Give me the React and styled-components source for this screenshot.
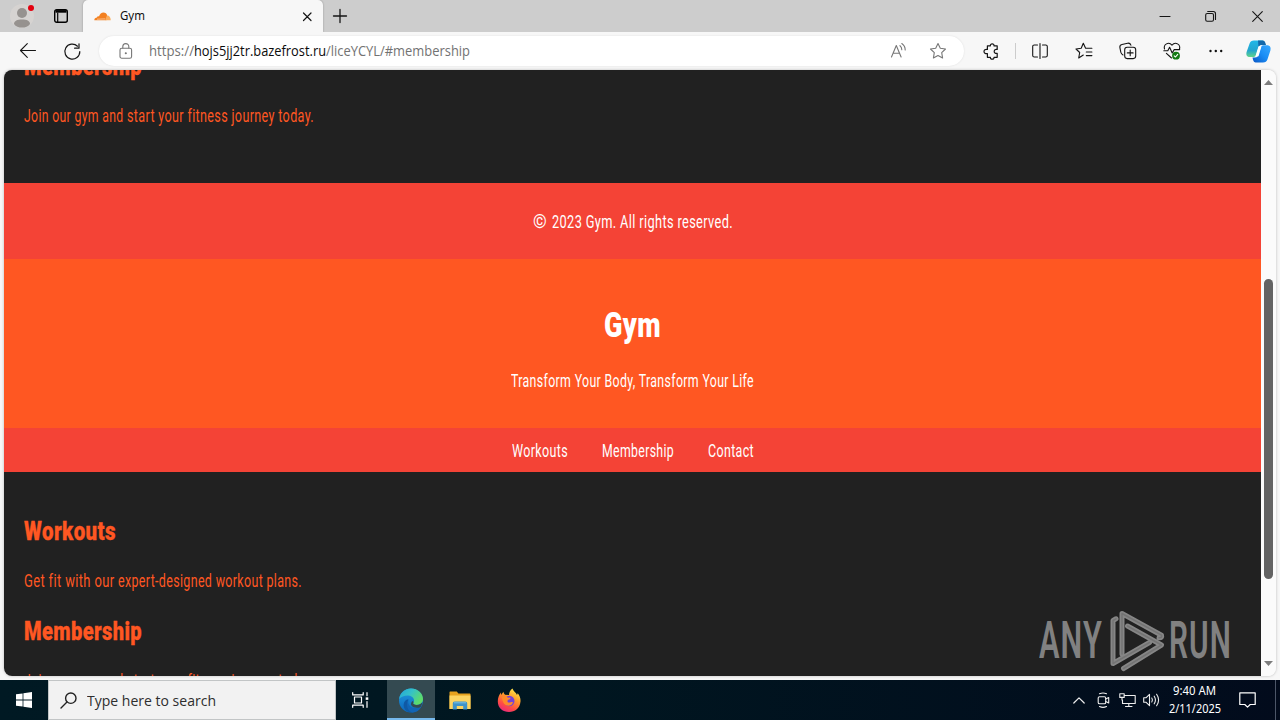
import React, { useLayoutEffect, useRef, useState } from "react";
import styled, { createGlobalStyle } from "styled-components";

const Global = createGlobalStyle`
  *, *::before, *::after { box-sizing: border-box; }
  body { margin: 0; overflow: hidden; background: #f7f7f7; }
  svg { display: block; flex: none; overflow: visible; }
  p, h1, h2 { margin: 0; font-weight: 400; }
`;

const FitBox = styled.span`
  display: inline-block;
  width: ${(p) => p.$w}px;
  white-space: pre;
  vertical-align: top;
  text-align: left;
`;
const FitInner = styled.span`
  display: inline-block;
  transform-origin: 0 50%;
`;

/* Condenses a run of text so that it takes exactly w pixels. */
function Fit({ w, children }) {
  const ref = useRef(null);
  const [scale, setScale] = useState(1);
  useLayoutEffect(() => {
    const natural = parseFloat(getComputedStyle(ref.current).width);
    if (natural) setScale(w / natural);
  }, [w, children]);
  return (
    <FitBox $w={w}>
      <FitInner ref={ref} style={{ transform: `scaleX(${scale})` }}>{children}</FitInner>
    </FitBox>
  );
}

const Desktop = styled.div`
  width: 1280px;
  height: 720px;
  display: flex;
  flex-direction: column;
  overflow: hidden;
  font-family: "Noto Sans", "Open Sans", sans-serif;
`;

/* ---- tab strip ---- */
const TabStrip = styled.div`
  height: 32px;
  display: flex;
  background: #cdcdcd;
`;
const StripButton = styled.div`
  width: ${(p) => p.$w}px;
  display: flex;
  align-items: center;
  justify-content: center;
`;
const Tab = styled.div`
  width: 240px;
  height: 32px;
  padding: 0 10px 0 11px;
  display: flex;
  align-items: center;
  background: #f7f7f7;
  border-radius: 5px 5px 0 0;
  box-shadow: 0 0 2px rgba(0, 0, 0, 0.3);
  clip-path: inset(0 -3px 0 -3px);
  font-size: 12px;
  line-height: 18px;
  color: #111;
`;
const TabTitle = styled.div`
  flex: 1;
  padding-left: 9px;
  height: 18px;
`;
const Spacer = styled.div`
  flex: 1;
`;

/* ---- toolbar ---- */
const Toolbar = styled.div`
  height: 38px;
  padding-left: 6px;
  display: flex;
  align-items: center;
  background: #f7f7f7;
`;
const ToolButton = styled.div`
  width: ${(p) => p.$w || 44}px;
  height: 38px;
  display: flex;
  align-items: center;
  justify-content: center;
`;
const AddressBar = styled.div`
  width: 865px;
  height: 30px;
  margin: 0 5px;
  padding-right: 6px;
  display: flex;
  align-items: center;
  background: #fff;
  border-radius: 15px;
  box-shadow: 0 0 2px #ddd;
  font-family: "Open Sans", "Noto Sans", sans-serif;
  font-size: 14px;
  line-height: 20px;
  color: #727272;
`;
const LockSlot = styled.div`
  width: 50px;
  padding-left: 20px;
`;
const Url = styled.div`
  flex: 1;
  height: 20px;
  display: flex;
`;
const Host = styled.span`
  color: #0c0c0c;
`;
const Divider = styled.div`
  width: 1px;
  height: 16px;
  margin: 0 2px;
  background: #ccc;
`;

/* ---- web page ---- */
const Viewport = styled.div`
  height: 606px;
  margin: 0 4px 4px;
  display: flex;
  border-radius: 8px;
  overflow: hidden;
  box-shadow: 0 0 3px rgba(0, 0, 0, 0.25);
`;
const Page = styled.div`
  position: relative;
  width: 1257px;
  height: 606px;
  overflow: hidden;
  background: #212121;
  font-family: Roboto, "Liberation Sans Narrow", sans-serif;
  letter-spacing: 0.5px;
`;
const Section = styled.section`
  margin-top: ${(p) => p.$shift || 0}px;
  padding: ${(p) => p.$top || 0}px 20px ${(p) => p.$bottom || 0}px;
  color: #ff5722;
`;
const Band = styled.div`
  height: ${(p) => p.$h}px;
  padding-top: ${(p) => p.$top}px;
  background: ${(p) => p.$bg};
  color: #fff;
  text-align: center;
`;
const SectionTitle = styled.h2`
  height: 36px;
  margin-bottom: 19px;
  font-size: 26px;
  line-height: 34px;
  font-weight: 900;
  -webkit-text-stroke: 0.3px currentColor;
`;
const Text = styled.p`
  height: 24px;
  font-size: 18px;
  line-height: 24px;
  & + h2 { margin-top: 21px; }
`;
const Title = styled.h1`
  height: 48px;
  margin-bottom: 19px;
  font-size: 35px;
  line-height: 48px;
  font-weight: 900;
`;
const Nav = styled(Band)`
  display: flex;
  justify-content: center;
  gap: 34px;
  font-size: 18px;
  line-height: 24px;
`;
const ScrollTrack = styled.div`
  width: 15px;
  padding: 10px 0;
  display: flex;
  flex-direction: column;
  align-items: center;
  background: #fbfbfb;
`;
const ScrollThumb = styled.div`
  width: 9px;
  height: 300px;
  margin: 194px 0 auto;
  border-radius: 5px;
  background: #636363;
`;
const Watermark = styled.div`
  position: absolute;
  left: 1035px;
  top: 540px;
  height: 62px;
  display: flex;
  align-items: center;
  gap: 7px;
  color: #818181;
  font-size: 52px;
  font-weight: 600;
  line-height: 62px;
  letter-spacing: 2px;
`;

/* ---- taskbar ---- */
const Taskbar = styled.div`
  height: 40px;
  display: flex;
  background: linear-gradient(90deg, #001923 0, #001620 45%, #020b1c 100%);
`;
const TaskButton = styled.div`
  width: ${(p) => p.$w}px;
  display: flex;
  align-items: center;
  justify-content: center;
  background: ${(p) => (p.$active ? "#344a51" : "transparent")};
  border-bottom: 2px solid ${(p) => (p.$active ? "#76b9ed" : "transparent")};
  border-top: 2px solid transparent;
`;
const SearchBox = styled.div`
  width: 288px;
  padding-left: 11px;
  display: flex;
  align-items: center;
  gap: 10px;
  background: #f2f2f2;
  border: 1px solid #c2c5c6;
  color: #2e2e2e;
  font-family: "Open Sans", "Noto Sans", sans-serif;
  font-size: 15px;
  line-height: 22px;
`;
const TrayIcon = styled.div`
  width: 24px;
  display: flex;
  align-items: center;
  justify-content: center;
`;
const Clock = styled.div`
  width: 63px;
  padding-top: 2px;
  display: flex;
  flex-direction: column;
  align-items: center;
  color: #fff;
  font-size: 12px;
  line-height: 18px;
`;
const ActionCenter = styled.div`
  width: 50px;
  padding-right: 6px;
  display: flex;
  align-items: center;
  justify-content: center;
  border-right: 1px solid #4c5668;
  margin-right: 4px;
`;

const Icon = ({ w = 18, h = w, stroke = "#151515", sw = 1.2, children }) => (
  <svg width={w} height={h} viewBox={`0 0 ${w} ${h}`} fill="none" stroke={stroke} strokeWidth={sw} strokeLinecap="round" strokeLinejoin="round">
    {children}
  </svg>
);

const STAR = "M9 1.5l2.3 4.8 5.2.7-3.8 3.7.9 5.3L9 13.5 4.4 16l.9-5.3L1.5 7l5.2-.7z";

function BrowserTabs() {
  return (
    <TabStrip>
      <StripButton $w={44}>
        <Icon w={24} h={28} stroke="none">
          <circle cx="12" cy="14" r="12" fill="#d6d3d1" />
          <circle cx="12" cy="11" r="5" fill="#96928f" />
          <path d="M4 22c0-3.200 3.300-4.600 8-4.600s8 1.400 8 4.600c-1.800 2.600-4.600 3.600-8 3.600s-6.200-1-8-3.600z" fill="#96928f" />
          <circle cx="21" cy="6" r="3" fill="#e3000f" />
        </Icon>
      </StripButton>
      <StripButton $w={39}>
        <Icon w={20} h={14} stroke="#000">
          <rect x=".7" y=".7" width="12.600" height="12.600" rx="2" strokeWidth="1.400" />
          <path d="M1.500 2.400h11" strokeWidth="2.600" strokeLinecap="butt" />
          <path d="M3.700 4v9" />
        </Icon>
      </StripButton>
      <Tab>
        <svg width="17" height="9" viewBox="0 0 17 9">
          <path d="M.3 8.200C.2 6.300 1.600 5.500 3 5.500 3.200 4.200 4.300 4 5 4.400 5.800 1.800 7.500.4 9.400.4c2 0 3.400 1.200 3.800 3l-.9 4.800z" fill="#f38020" />
          <path d="M11.500 8.200l1.300-4.600c2.300-.2 3.900 1.700 3.900 4.600z" fill="#fbad5c" />
          <path d="M3 7.200l8.300-.3" stroke="#fff" strokeWidth=".5" />
        </svg>
        <TabTitle><Fit w={25}>Gym</Fit></TabTitle>
        <Icon w={11} sw={1.2}><path d="M1.500 2l7.500 7.500M9 2L1.500 9.500" /></Icon>
      </Tab>
      <StripButton $w={34}>
        <Icon w={14} sw={1.3}><path d="M7 .5v13M.5 7h13" /></Icon>
      </StripButton>
      <Spacer />
      <StripButton $w={46}><Icon w={10} sw={1.1}><path d="M0 5.500h10" /></Icon></StripButton>
      <StripButton $w={46}>
        <Icon w={12} h={11} sw={1.1}>
          <rect x=".7" y="2.500" width="7.800" height="7.800" rx="1.500" />
          <path d="M2.700.5h5.600a2.200 2.200 0 0 1 2.200 2.200v5.700" />
        </Icon>
      </StripButton>
      <StripButton $w={46}><Icon w={11} sw={1.1}><path d="M.7.7l9.600 9.600M10.300.7L.7 10.300" /></Icon></StripButton>
    </TabStrip>
  );
}

function BrowserToolbar() {
  return (
    <Toolbar>
      <ToolButton><Icon w={16} sw={1.1}><path d="M15.500 7.500H.7M7.300.7L.5 7.500l6.800 6.800" /></Icon></ToolButton>
      <ToolButton>
        <Icon w={17} sw={1.200}><path d="M15.800 8.500A7.500 7.500 0 1 1 13.500 3.200M15 .8v4.400h-4.400" /></Icon>
      </ToolButton>
      <AddressBar>
        <LockSlot>
          <Icon w={14} h={16} stroke="#777" sw={1.1}>
            <rect x="1" y="5.200" width="11.600" height="10" rx="1.800" />
            <path d="M3.800 5V3.600a3 3 0 0 1 6 0V5" />
            <circle cx="6.800" cy="10.200" r=".5" fill="#777" />
          </Icon>
        </LockSlot>
        <Url>
          <Fit w={45}>https://</Fit>
          <Host><Fit w={132}>hojs5jj2tr.bazefrost.ru</Fit></Host>
          <Fit w={144}>/liceYCYL/#membership</Fit>
        </Url>
        <ToolButton $w={40}>
          <Icon w={17} h={16} stroke="#777" sw={1.1}>
            <path d="M1.500 14L6.300 2.500l4.800 11.500M3 10.200h6.500M10 2.700c1.300 1 1.800 2.300 1.800 4M11.800.5c2.300 1.600 3.400 3.600 3.400 6.400" />
          </Icon>
        </ToolButton>
        <ToolButton $w={40}><Icon stroke="#777" sw={1.1}><path d={STAR} /></Icon></ToolButton>
      </AddressBar>
      <ToolButton>
        <Icon w={17} sw={1.2}>
          <path d="M4.400 2.800h3C7.200 1.600 8.100.9 9.200.9s2 .7 1.800 1.900h3.200v3.700c-2-.4-3 .6-3 1.900s1 2.300 3 1.900v4H11c.2 1.200-.7 1.900-1.800 1.900s-2-.7-1.800-1.900h-3v-3.700C2.200 10.900 1 9.800 1 8.400s1.200-2.300 3.400-2z" />
        </Icon>
      </ToolButton>
      <Divider />
      <ToolButton>
        <Icon w={16} sw={1.1}>
          <path d="M5.500 2H2.300C1.300 2 .7 2.600.7 3.600v8.800c0 1 .6 1.600 1.600 1.600h3.200M10.500 2h3.200c1 0 1.600.6 1.600 1.600v8.800c0 1-.6 1.600-1.600 1.600h-3.200M8 .5v15" />
        </Icon>
      </ToolButton>
      <ToolButton>
        <Icon w={18} sw={1.1}>
          <path d="M8.300 13L3.700 16l1-5.500L1 7l5.200-.7L8.300 1.300l2.300 5h6.300M11.300 10h5.600M11.300 13.600h5.600" />
        </Icon>
      </ToolButton>
      <ToolButton>
        <Icon w={18} sw={1.1}>
          <rect x="5.700" y="5.200" width="11" height="11.400" rx="2.500" />
          <path d="M11.200 8v5.800M8.300 10.900h5.800M4 12.900C2.800 12.300 2.100 11.400 1.800 10.200L.9 5.600C.6 4 1.400 2.900 3 2.500L8.600 1.200c1.600-.3 2.800.5 3.300 2" />
        </Icon>
      </ToolButton>
      <ToolButton>
        <Icon w={18} sw={1.1}>
          <path d="M1.500 7C.2 2.500 5.600-.9 9 3.200c3.400-4.100 8.800-.7 7.500 3.800M.8 8.800h4l1.800-3.600 2.600 5.800 2-3.400h5.500M3.400 11.300L8.500 16" />
          <circle cx="13" cy="13.700" r="3.900" fill="#137a13" stroke="none" />
          <path d="M11.200 13.800l1.300 1.200 2.200-2.600" stroke="#fff" />
        </Icon>
      </ToolButton>
      <ToolButton>
        <Icon w={14} h={4} stroke="none">
          {[1.5, 6.8, 12.2].map((x) => <circle key={x} cx={x} cy="2" r="1.200" fill="#111" />)}
        </Icon>
      </ToolButton>
      <ToolButton $w={40}>
        <svg width="25" height="23" viewBox="0 0 25 23">
          <defs>
            <linearGradient id="cpA" x1="0" y1="0" x2="0" y2="1">
              <stop offset="0" stopColor="#21b8e8" /><stop offset=".6" stopColor="#24a5cf" /><stop offset="1" stopColor="#61d48a" />
            </linearGradient>
            <linearGradient id="cpB" x1="0" y1="1" x2="1" y2="0">
              <stop offset="0" stopColor="#0a56c4" /><stop offset=".5" stopColor="#1a8df5" /><stop offset="1" stopColor="#39a9ff" />
            </linearGradient>
          </defs>
          <path d="M8 .5h8.500c2 0 2.300 2.200 3 4.500H15c-1.500 0-2 1-2.500 2.500L10 15c-.5 1.500-1.500 2-3 2H4C1 17-.2 15 .6 12L3.500 3.800C4.300 1.600 5.600.5 8 .5z" fill="url(#cpA)" />
          <path d="M12 .5h5c2 0 2.300 2.200 3 4.500h-5c-1.500 0-2 1-2.500 2.500z" fill="#1468aa" />
          <path d="M17 22.500H9.500c-2 0-2.300-2.200-3-5H9c2 0 2.800-.8 3.300-2.500l2.500-7.500C15.300 6 16 5.300 17.500 5.300H21c3 0 4.200 2.200 3.400 5.200l-2.900 8.700c-.8 2.200-2.100 3.300-4.500 3.300z" fill="url(#cpB)" />
          <path d="M12.500 6.200h3l-3 10h-3z" fill="#fff" />
        </svg>
      </ToolButton>
    </Toolbar>
  );
}

function WatermarkLogo() {
  const bands = (
    <>
      <path d="M7 8.800L4 10.500V53.500L40.500 32.500" />
      <path d="M13 44V3.500L52.500 25.200Q53.500 28 50 27.800" />
      <path d="M18.500 16L52.500 35 14.500 58.500" />
    </>
  );
  return (
    <Watermark>
      <Fit w={64}>ANY</Fit>
      <svg width="52" height="62" viewBox="1 0 52 62" fill="none" strokeLinejoin="round" strokeLinecap="round">
        <g stroke="#868686" strokeWidth="5">{bands}</g>
        <g stroke="#747474" strokeWidth="1.500">{bands}</g>
      </svg>
      <Fit w={63}>RUN</Fit>
    </Watermark>
  );
}

function GymPage() {
  return (
    <Page>
      <Section $shift={-21} $bottom={55}>
        <SectionTitle><Fit w={118}>Membership</Fit></SectionTitle>
        <Text><Fit w={103}>Join our gym and </Fit><Fit w={187}>start your fitness journey today.</Fit></Text>
      </Section>
      <Band $h={76} $top={27} $bg="#f44336">
        <Text><Fit w={19}>© </Fit><Fit w={181}>2023 Gym. All rights reserved.</Fit></Text>
      </Band>
      <Band as="header" $h={169} $top={43} $bg="#ff5722">
        <Title><Fit w={57}>Gym</Fit></Title>
        <Text><Fit w={243}>Transform Your Body, Transform Your Life</Fit></Text>
      </Band>
      <Nav as="nav" $h={44} $top={11} $bg="#f44336">
        <Fit w={56}>Workouts</Fit>
        <Fit w={72}>Membership</Fit>
        <Fit w={46}>Contact</Fit>
      </Nav>
      <Section $top={42}>
        <SectionTitle><Fit w={92}>Workouts</Fit></SectionTitle>
        <Text><Fit w={94}>Get fit with our </Fit><Fit w={184}>expert-designed workout plans.</Fit></Text>
        <SectionTitle><Fit w={118}>Membership</Fit></SectionTitle>
        <Text><Fit w={103}>Join our gym and </Fit><Fit w={187}>start your fitness journey today.</Fit></Text>
      </Section>
      <WatermarkLogo />
    </Page>
  );
}

function WindowsTaskbar() {
  return (
    <Taskbar>
      <TaskButton $w={48}>
        <svg width="16" height="16" viewBox="0 0 16 16" fill="#fff">
          <path d="M0 2.300L6.600 1.400v6.100H0zM7.400 1.300L16 0v7.500H7.400zM0 8.400h6.600v6.200L0 13.700zM7.400 8.400H16V16l-8.600-1.300z" />
        </svg>
      </TaskButton>
      <SearchBox>
        <Icon w={17} sw={1.4} stroke="#222"><circle cx="10.800" cy="6.200" r="5.200" /><path d="M7 10L1 16" /></Icon>
        <Fit w={129}>Type here to search</Fit>
      </SearchBox>
      <TaskButton $w={51}>
        <Icon w={19} h={16} stroke="#fff">
          <path d="M.7.700v2.200h10.500V.7M.7 15.300v-2.200h10.500v2.200M2.500 5h7v6h-7zM15 .7v3M15 9.500v5.800" />
          <path d="M13.700 6.600h2.600" strokeWidth="2.500" strokeLinecap="butt" />
        </Icon>
      </TaskButton>
      <TaskButton $w={48} $active>
        <svg width="24" height="25" viewBox="0 0 24 24">
          <defs>
            <linearGradient id="edT" x1="0" y1="0" x2="1" y2=".5">
              <stop offset="0" stopColor="#22a5d8" /><stop offset=".5" stopColor="#35c1c8" /><stop offset="1" stopColor="#5edc68" />
            </linearGradient>
            <linearGradient id="edB" x1="0" y1="0" x2="0" y2="1">
              <stop offset="0" stopColor="#229cdf" /><stop offset="1" stopColor="#0b66bd" />
            </linearGradient>
          </defs>
          <circle cx="12" cy="12" r="12" fill="url(#edB)" />
          <path d="M.2 10.500C1 4.500 6 0 12 0c7 0 12 5 12 10.600 0 3.500-2.700 5.900-6.500 5.900-2.500 0-4-.9-3-2.200 1.800-2.400-.3-7-5.200-7.300C5.500 6.800 2 8.300.2 10.500z" fill="url(#edT)" />
          <path d="M9.400 10.800C6.800 17 10.500 22 15.500 23.300 8.500 25.500 4.500 20.500 4.600 16.500c.1-3.500 2-5.200 4.800-5.700z" fill="#0f59a5" />
          <path d="M9.800 11c-2.500 5.300 3 11.300 12.500 7.300C20 22 17.500 24 13.500 23.900 8 22.500 6.500 15.500 9.800 11z" fill="#1264b5" />
          <path d="M14.200 14.600c-.8 1.500 4.200 2.900 7.200.9l2-1.700c-.3 1.800-.9 3.400-1.700 4.600-3.500 1.600-7.500.8-9.200-1.400-1-1.400-.6-3.600 1.200-4.600.8.600.8 1.600.5 2.200z" fill="#344a51" />
        </svg>
      </TaskButton>
      <TaskButton $w={50}>
        <svg width="22" height="19" viewBox="0 0 22 19">
          <path d="M.5 1.200Q.5.500 1.200.5h6.600l1.600 2h11.400q.7 0 .7.700V18H.5z" fill="#e6a21f" />
          <path d="M.5 4.500h21V18H.5z" fill="#fcd462" />
          <path d="M3.800 18.500v-6.200Q3.800 10.500 5.600 10.500h10.800q1.800 0 1.800 1.800v6.200h-4V15H7.800v3.500z" fill="#3f93c9" />
          <path d="M5 11.800h12" stroke="#79bfe3" strokeWidth="1" />
        </svg>
      </TaskButton>
      <TaskButton $w={48}>
        <svg width="24" height="25" viewBox="0 0 24 25">
          <defs>
            <linearGradient id="ff" x1=".8" y1="0" x2=".3" y2="1">
              <stop offset="0" stopColor="#fff04f" /><stop offset=".4" stopColor="#ff9b29" /><stop offset=".75" stopColor="#ff4a46" /><stop offset="1" stopColor="#e92a7b" />
            </linearGradient>
          </defs>
          <path d="M15.500.5c1 3 3.500 4 4.500 6.500l.7-1.800C23 8 23.700 10.800 23.500 13.500 23 20 18 24 12 24S.8 20 .8 13.500c0-3.500 1-6.500 3.200-9L4.200 7l2.200-3.200c.3 1.400.8 2.200 1.600 2.900L12 7c0-2.500 1.200-5 3.500-6.500z" fill="url(#ff)" />
          <circle cx="12.300" cy="13" r="5.200" fill="#7542d8" />
          <path d="M4.500 9c2-2 5-1.500 6 .5 1 .3 2.500.1 3.100.4-.4 1.500-2 1.400-3 2.500-.5 1.300.3 2.200 1.600 2.200 1.600 0 2.300-1 3.800-.3-1 3.700-5 4.300-7.500 2.700C6 15.500 5.500 12 4.500 9z" fill="#ff8a29" />
        </svg>
      </TaskButton>
      <Spacer />
      <TrayIcon><Icon w={12} h={7} stroke="#eee"><path d="M.8 6L6 .8 11.200 6" /></Icon></TrayIcon>
      <TrayIcon>
        <Icon w={13} h={16} stroke="#eee" sw={1.1}>
          <rect x="1.200" y="4.700" width="7.500" height="7" rx="1.300" />
          <path d="M8.700 7l3-1.500v5.500l-3-1.500M2.500 1.800Q6 .2 9.500 1.800M2.500 14.500Q6 16.200 9.500 14.500" />
        </Icon>
      </TrayIcon>
      <TrayIcon>
        <Icon w={17} h={15} stroke="#eee" sw={1.1}>
          <path d="M5 2.500h11.200v8H3.500V7M9.800 10.500v3M6.500 13.500h6.500M.8.800h4.400v3.600H.8zM3 4.400V7" />
        </Icon>
      </TrayIcon>
      <TrayIcon>
        <Icon w={17} h={14} stroke="#eee" sw={1.1}>
          <path d="M.7 4.800h2.200L6.500 1.300v11.400L2.900 9.200H.7zM8.800 5q1.300 2 0 4M11.200 3.200q2.500 3.800 0 7.600M13.600 1.300q4 5.700 0 11.400" />
        </Icon>
      </TrayIcon>
      <Clock>
        <Fit w={43}>9:40 AM</Fit>
        <Fit w={52}>2/11/2025</Fit>
      </Clock>
      <ActionCenter>
        <Icon w={17} h={16} stroke="#fff"><path d="M.8.800h15.400v11.700h-5l-2.700 2.700-2.700-2.700H.8z" /></Icon>
      </ActionCenter>
    </Taskbar>
  );
}

export default function App() {
  return (
    <Desktop>
      <Global />
      <BrowserTabs />
      <BrowserToolbar />
      <Viewport>
        <GymPage />
        <ScrollTrack>
          <Icon w={9} h={5} stroke="none"><path d="M4.500 0L9 5H0z" fill="#7c7c7c" /></Icon>
          <ScrollThumb />
          <Icon w={9} h={5} stroke="none"><path d="M0 0h9L4.500 5z" fill="#7c7c7c" /></Icon>
        </ScrollTrack>
      </Viewport>
      <WindowsTaskbar />
    </Desktop>
  );
}
